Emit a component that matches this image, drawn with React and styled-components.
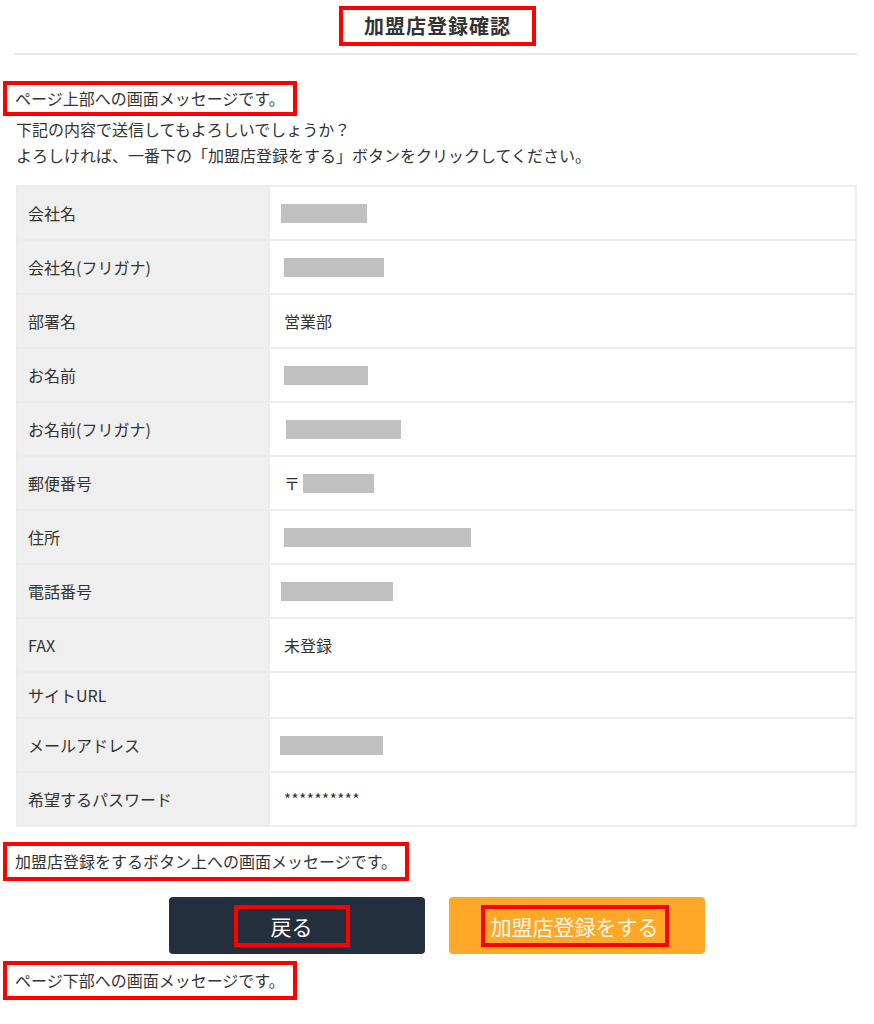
import styled, { createGlobalStyle } from 'styled-components';

const GlobalStyle = createGlobalStyle`
  body {
    margin: 0;
    background: #fff;
    color: #333;
    font-family: "Noto Sans CJK JP", "Noto Sans", sans-serif;
  }
`;

const Page = styled.div`
  padding: 6px 17px 20px 16px;
`;

const Header = styled.header`
  display: flex;
  justify-content: center;
  padding: 0 0 7px 4px;
  border-bottom: 2px solid #e6e6e6;
  margin: 0 0 0 -2px;
`;

const Title = styled.h1`
  margin: 0;
  padding: 0 21px;
  border: 4px solid #f00;
  font-size: 20px;
  line-height: 32px;
  font-weight: bold;
  letter-spacing: 1px;
  color: #333;
`;

const Intro = styled.div`
  margin-top: 26px;
  font-size: 16px;
  line-height: 26px;
`;

const Notice = styled.p`
  display: inline-block;
  margin: 0 0 0 -13px;
  padding: 0 8px;
  border: 4px solid #f00;
  font-size: 16px;
  line-height: ${(p) => p.$lh || 27}px;
`;

const Line = styled.p`
  margin: 0;
`;

const Table = styled.table`
  width: 100%;
  margin-top: 17px;
  border-collapse: collapse;
  border: 2px solid #ececec;
  font-size: 16px;
`;

const Row = styled.tr`
  border-bottom: 2px solid #ececec;
`;

const Label = styled.th`
  width: 230px;
  padding: 11px 10px;
  background: #efefef;
  border-right: 2px solid #ececec;
  text-align: left;
  font-weight: normal;
  line-height: 22px;
  vertical-align: middle;
`;

const Value = styled.td`
  padding: 15px 14px;
  vertical-align: middle;
`;

const ValueInner = styled.div`
  display: flex;
  align-items: center;
  height: 22px;
  line-height: 22px;
`;

const Masked = styled.span`
  display: block;
  width: ${(p) => p.$w}px;
  height: 19px;
  margin-left: ${(p) => p.$x || 0}px;
  background: #c0c0c0;
`;

const Stars = styled.span`
  font-size: 15px;
  letter-spacing: 0.6px;
`;

const Bottom = styled.div`
  margin-top: 15px;
`;

const Buttons = styled.div`
  display: flex;
  justify-content: center;
  gap: 24px;
  margin: 16px 0 7px;
`;

const Button = styled.button`
  width: 256px;
  height: 57px;
  display: flex;
  align-items: center;
  justify-content: center;
  border: none;
  border-radius: 4px;
  background: ${(p) => (p.$primary ? '#ffa726' : '#232e3f')};
  color: ${(p) => (p.$primary ? '#fff7ea' : '#fff')};
  font-family: inherit;
  font-size: 21px;
  cursor: pointer;
`;

const ButtonText = styled.span`
  padding: 0 ${(p) => p.$pad}px;
  border: 4px solid #f00;
  line-height: 34px;
  margin-right: ${(p) => p.$shift || 0}px;
`;

const rows = [
  { label: '会社名', masked: 86, x: -3 },
  { label: '会社名(フリガナ)', masked: 100 },
  { label: '部署名', text: '営業部' },
  { label: 'お名前', masked: 84 },
  { label: 'お名前(フリガナ)', masked: 115, x: 2 },
  { label: '郵便番号', zip: 71 },
  { label: '住所', masked: 187 },
  { label: '電話番号', masked: 112, x: -3 },
  { label: 'FAX', text: '未登録' },
  { label: 'サイトURL', text: '' },
  { label: 'メールアドレス', masked: 103, x: -4 },
  { label: '希望するパスワード', stars: '**********' },
];

function renderValue(r) {
  if (r.masked) return <Masked $w={r.masked} $x={r.x} />;
  if (r.zip)
    return (
      <>
        〒<Masked $w={r.zip} $x={3} />
      </>
    );
  if (r.stars) return <Stars>{r.stars}</Stars>;
  return r.text;
}

export default function App() {
  return (
    <>
      <GlobalStyle />
      <Page>
        <Header>
          <Title>加盟店登録確認</Title>
        </Header>

        <Intro>
          <Notice>ページ上部への画面メッセージです。</Notice>
          <Line>下記の内容で送信してもよろしいでしょうか？</Line>
          <Line>よろしければ、一番下の「加盟店登録をする」ボタンをクリックしてください。</Line>
        </Intro>

        <Table>
          <tbody>
            {rows.map((r) => (
              <Row key={r.label}>
                <Label>{r.label}</Label>
                <Value>
                  {r.text === '' ? null : <ValueInner>{renderValue(r)}</ValueInner>}
                </Value>
              </Row>
            ))}
          </tbody>
        </Table>

        <Bottom>
          <Notice $lh={31}>加盟店登録をするボタン上への画面メッセージです。</Notice>
        </Bottom>

        <Buttons>
          <Button type="button">
            <ButtonText $pad={33} $shift={10}>戻る</ButtonText>
          </Button>
          <Button type="button" $primary>
            <ButtonText $pad={6} $shift={4}>加盟店登録をする</ButtonText>
          </Button>
        </Buttons>

        <Notice $lh={31}>ページ下部への画面メッセージです。</Notice>
      </Page>
    </>
  );
}
